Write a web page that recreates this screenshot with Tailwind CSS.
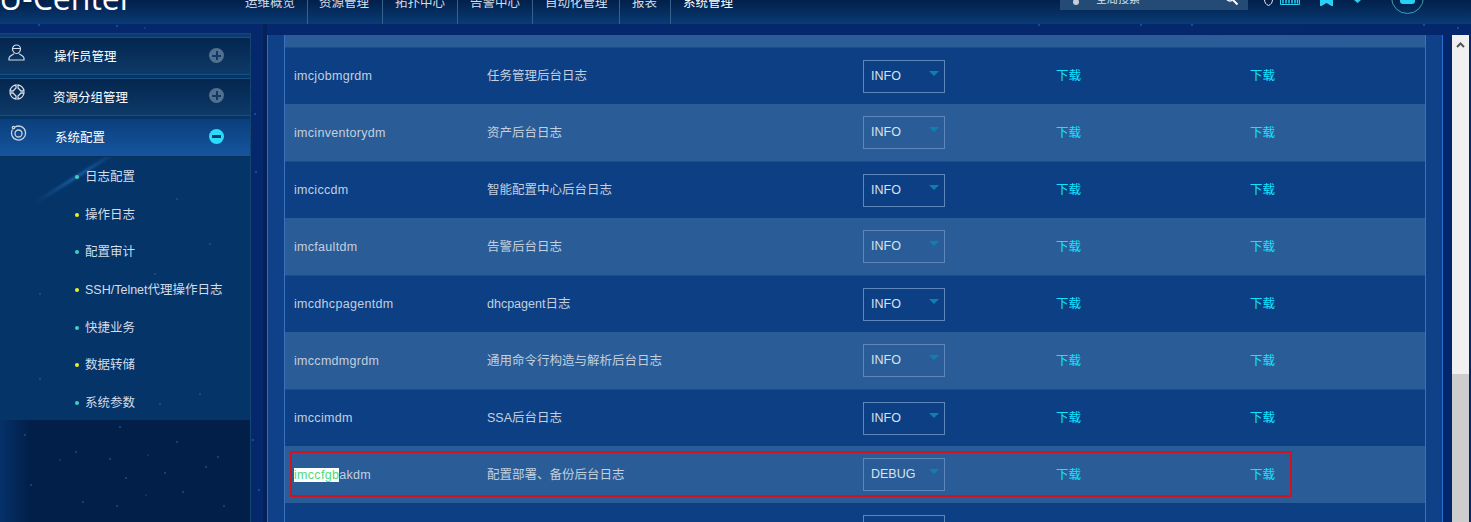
<!DOCTYPE html>
<html lang="zh-CN">
<head>
<meta charset="UTF-8">
<title>U-Center</title>
<script src="https://cdn.jsdelivr.net/npm/@tailwindcss/browser@4"></script>
</head>
<body class="bg-[#04266a] overflow-hidden font-['Liberation_Sans','Noto_Sans_CJK_SC',sans-serif]">
<div class="relative w-[1471px] h-[522px] overflow-hidden">

  <!-- Top bar -->
  <header class="h-[24px] flex items-start bg-gradient-to-b from-[#02204a] to-[#0a3b76] overflow-hidden">
    <div class="w-[246px] shrink-0 -mt-[18px] -ml-[1px] text-[32px] leading-[32px] font-['Open_Sans'] font-medium text-white whitespace-nowrap">U-Center</div>
    <nav class="flex h-[24px] text-[12.5px] leading-[14px] text-[#d4deea] -mt-[4px] whitespace-nowrap">
      <a class="w-[63px] border-r border-[#36618c] h-[28px]">运维概览</a>
      <a class="w-[75px] pl-[11px] border-r border-[#36618c] h-[28px]">资源管理</a>
      <a class="w-[75px] pl-[12px] border-r border-[#36618c] h-[28px]">拓扑中心</a>
      <a class="w-[75px] pl-[12px] border-r border-[#36618c] h-[28px]">告警中心</a>
      <a class="w-[87px] pl-[12px] border-r border-[#36618c] h-[28px]">自动化管理</a>
      <a class="w-[51px] pl-[12px] border-r border-[#36618c] h-[28px]">报表</a>
      <a class="pl-[12px] text-white">系统管理</a>
    </nav>
    <div class="ml-[327px] w-[188px] h-[10px] bg-[#234b76] shrink-0 relative overflow-hidden">
      <span class="absolute left-[13px] -top-[1px] w-[6px] h-[6px] rounded-full bg-[#c6ced8]"></span>
      <span class="absolute left-[36px] -top-[7px] text-[11px] leading-[12px] text-[#d7e1ec] whitespace-nowrap">全局搜索</span>
      <svg class="absolute left-[165px] -top-[7px]" width="14" height="14" viewBox="0 0 14 14" fill="none" stroke="#fff" stroke-width="1.500"><circle cx="5" cy="4" r="4"/><path d="M8 7l4.500 4.500" stroke-width="2"/></svg>
    </div>
    <div class="flex items-start shrink-0">
      <svg class="ml-[16px] -mt-[2px]" width="9" height="8" viewBox="0 0 9 8" fill="none" stroke="#e8eef5"><path d="M.5 1.500c1.500 0 3-1 4-1s2.500 1 4 1c0 3-1.500 5-4 6-2.500-1-4-3-4-6z"/></svg>
      <svg class="ml-[7px]" width="20" height="5" viewBox="0 0 20 5" fill="none"><path d="M.500 0v4.500h19V0" stroke="#28d0f5"/><path d="M3 0v3.500M6 0v3.500M9 0v3.500M12 0v3.500M15 0v3.500M17.500 0v3.500" stroke="#28d0f5" stroke-width="1.500"/></svg>
      <svg class="ml-[19px]" width="15" height="6" viewBox="0 0 15 6" fill="#28d0f5"><path d="M1 0h13v6h-1.500L7.500 3 2.500 6H1z"/></svg>
      <svg class="ml-[20px]" width="7" height="3" viewBox="0 0 7 3" fill="#28d0f5"><path d="M0 0h7L3.500 3z"/></svg>
    </div>
    <div class="ml-[30px] w-[33px] h-[33px] -mt-[19px] rounded-full border border-[#4a9aae] shrink-0 flex items-end justify-center pb-[9px]">
      <span class="w-[15px] h-[5px] rounded-b-[3px] bg-[#28d0f5]"></span>
    </div>
    <span class="ml-[7px] -mt-[10px] text-[12.500px] leading-[13px] text-white">admin</span>
  </header>

  <div class="relative flex h-[498px] bg-gradient-to-r from-[#04286b] from-[80%] to-[#04266a]">
    <!-- Starry background -->
    <svg class="absolute inset-0" width="1471" height="498" fill="#1b59a8">
      <circle cx="39" cy="1" r="1"/><circle cx="117" cy="2" r="1"/><circle cx="145" cy="4" r=".8"/><circle cx="1039" cy="1" r="1"/><circle cx="1141" cy="1" r="1"/><circle cx="1192" cy="1" r="1"/><circle cx="1424" cy="1" r="1"/><circle cx="1458" cy="4" r="1"/><circle cx="255" cy="90" r="1"/><circle cx="256" cy="148" r="1"/><circle cx="253" cy="416" r="1"/><circle cx="259" cy="466" r="1"/>
    </svg>
    <div class="absolute left-[263px] top-0 w-[4px] h-full bg-[#041f50]/70"></div>

    <!-- Left menu -->
    <aside class="relative w-[251px] h-[498px] shrink-0 mt-[9px] border-t border-r border-[#14476f] bg-gradient-to-r from-[#06316a] from-0% via-[#021f49] via-[12%] to-[#021f49] overflow-hidden">
      <svg class="absolute left-0 top-[386px]" width="250" height="110" fill="#174c92">
        <circle cx="25" cy="15" r="1"/><circle cx="76" cy="32" r="1"/><circle cx="110" cy="39" r="1"/><circle cx="120" cy="7" r="1"/><circle cx="177" cy="22" r="1"/><circle cx="218" cy="37" r="1"/><circle cx="206" cy="47" r="1"/><circle cx="126" cy="58" r="1"/><circle cx="165" cy="53" r="1"/><circle cx="31" cy="65" r="1"/><circle cx="83" cy="82" r="1"/><circle cx="117" cy="86" r="1"/><circle cx="183" cy="72" r="1"/><circle cx="224" cy="86" r="1"/><circle cx="215" cy="105" r="2" fill="#0f4a9c"/><circle cx="146" cy="75" r=".8"/><circle cx="148" cy="35" r=".8"/><circle cx="60" cy="40" r=".8"/>
      </svg>
      <div class="relative h-[386px] bg-[#053468] overflow-hidden">
        <!-- Light streak -->
        <div class="absolute left-[27px] top-[141px] w-[100px] h-[3px] -rotate-[32deg] bg-gradient-to-r from-transparent via-[#1a64aa] to-transparent blur-[1px]"></div>
        <svg class="absolute left-0 top-[120px]" width="250" height="265" fill="#14539a">
          <circle cx="177" cy="45" r="1"/><circle cx="210" cy="90" r="1"/><circle cx="155" cy="120" r="1"/><circle cx="40" cy="140" r="1"/><circle cx="200" cy="240" r="1"/><circle cx="40" cy="225" r="1"/><circle cx="160" cy="250" r="1"/><circle cx="120" cy="200" r=".8"/>
        </svg>

        <div class="h-[3px] bg-[#0a3a72]"></div>
        <div class="relative flex items-start h-[38px] border-y border-[#17507f] bg-gradient-to-b from-[#04264f] to-[#0e3a68]">
          <svg class="ml-[8px] mt-[6px] w-[17px] h-[17px]" viewBox="0 0 17 17" fill="none" stroke="#d5dde6" stroke-width="1.200"><path d="M4.500 5a4 4 0 0 1 8 0c0 2-1.500 4.500-4 4.500S4.500 7 4.500 5zM4 4.500h9"/><path d="M6 9.500c0 1-4.500 2-5 4.500v2h15v-2c-.5-2.500-5-3.500-5-4.500"/></svg>
          <span class="ml-[29px] mt-[10px] text-[12.500px] leading-[18px] text-white">操作员管理</span>
          <span class="ml-auto mr-[26px] mt-[10px] w-[15px] h-[15px] rounded-full bg-[#52708f] relative"><span class="absolute left-[3px] top-[6.500px] w-[9px] h-[2px] bg-[#0f3a66]"></span><span class="absolute left-[6.500px] top-[3px] w-[2px] h-[9px] bg-[#0f3a66]"></span></span>
        </div>
        <div class="relative flex items-start h-[38px] mt-[3px] border-y border-[#17507f] bg-gradient-to-b from-[#04264f] to-[#0e3a68]">
          <svg class="ml-[9px] mt-[5px] w-[16px] h-[16px]" viewBox="0 0 16 16" fill="none" stroke="#d5dde6" stroke-width="1.300"><path d="M7 1v3L4 7H1c.4-3 3-5.600 6-6zM9 1v3l3 3h3c-.4-3-3-5.600-6-6zM7 15v-3L4 9H1c.4 3 3 5.600 6 6zM9 15v-3l3-3h3c-.4 3-3 5.600-6 6z"/></svg>
          <span class="ml-[28px] mt-[10px] text-[12.500px] leading-[18px] text-white">资源分组管理</span>
          <span class="ml-auto mr-[26px] mt-[9px] w-[15px] h-[15px] rounded-full bg-[#52708f] relative"><span class="absolute left-[3px] top-[6.500px] w-[9px] h-[2px] bg-[#0f3a66]"></span><span class="absolute left-[6.500px] top-[3px] w-[2px] h-[9px] bg-[#0f3a66]"></span></span>
        </div>
        <div class="relative flex items-start h-[38px] mt-[3px] border-b border-[#0b2f5a] bg-gradient-to-b from-[#0b3f7c] to-[#15559f]">
          <svg class="ml-[10px] mt-[6px] w-[17px] h-[17px]" viewBox="0 0 17 17" fill="none" stroke="#c9d5e2" stroke-width="1.300"><path d="M5 2a7 7 0 1 1-2.500 2.500"/><circle cx="3.500" cy="2.500" r="1.200"/><circle cx="8.500" cy="8.500" r="3.500"/></svg>
          <span class="ml-[28px] mt-[10px] text-[12.500px] leading-[18px] text-white">系统配置</span>
          <span class="ml-auto mr-[26px] mt-[10px] w-[15px] h-[15px] rounded-full bg-[#28dcfb] relative"><span class="absolute left-[3px] top-[6px] w-[9px] h-[3px] bg-[#0f3a66]"></span></span>
        </div>
        <ul class="relative text-[12.500px] leading-[18px] text-[#d3dde8]">
          <li class="flex items-center h-[37.700px] mt-[1px]"><span class="ml-[75px] w-[4px] h-[4px] rounded-full bg-[#3fd0c0]"></span><span class="ml-[6px]">日志配置</span></li>
          <li class="flex items-center h-[37.700px]"><span class="ml-[75px] w-[4px] h-[4px] rounded-full bg-[#f0ee20]"></span><span class="ml-[6px]">操作日志</span></li>
          <li class="flex items-center h-[37.700px]"><span class="ml-[75px] w-[4px] h-[4px] rounded-full bg-[#3fd0c0]"></span><span class="ml-[6px]">配置审计</span></li>
          <li class="flex items-center h-[37.700px]"><span class="ml-[75px] w-[4px] h-[4px] rounded-full bg-[#f0ee20]"></span><span class="ml-[6px]">SSH/Telnet代理操作日志</span></li>
          <li class="flex items-center h-[37.700px]"><span class="ml-[75px] w-[4px] h-[4px] rounded-full bg-[#3fd0c0]"></span><span class="ml-[6px]">快捷业务</span></li>
          <li class="flex items-center h-[37.700px]"><span class="ml-[75px] w-[4px] h-[4px] rounded-full bg-[#f0ee20]"></span><span class="ml-[6px]">数据转储</span></li>
          <li class="flex items-center h-[37.700px]"><span class="ml-[75px] w-[4px] h-[4px] rounded-full bg-[#3fd0c0]"></span><span class="ml-[6px]">系统参数</span></li>
        </ul>
      </div>
    </aside>

    <!-- Log table panel -->
    <main class="relative ml-[16px] mt-[11px] w-[1176px] h-[487px] bg-[#0e4187] border-x border-[#2a6fd0] px-[16px] overflow-hidden">
      <div class="border-x border-[#3a72c0] text-[12.500px] leading-[16px] text-[#c3cfdd]">
        <div class="h-[12px] bg-[#2a5d98]"></div>

        <div class="grid grid-cols-[193px_376px_194px_193px_1fr] items-center h-[57px] pl-[9px] bg-[#0d3f85] border-t border-[#1a4c90]">
          <span class="tracking-[0.3px]">imcjobmgrdm</span><span>任务管理后台日志</span>
          <span class="relative w-[82px] h-[33px] border border-[#5f86b8] pl-[7px] leading-[31px] text-[#d8e2ee]">INFO<i class="absolute right-[5px] top-[10px] border-x-[5px] border-t-[5px] border-x-transparent border-t-[#0f7fb0]"></i></span>
          <a class="-ml-[1px] text-[#10e4fb]">下载</a><a class="text-[#10e4fb]">下载</a>
        </div>
        <div class="grid grid-cols-[193px_376px_194px_193px_1fr] items-center h-[57px] pl-[9px] bg-[#2a5d98]">
          <span class="tracking-[0.3px]">imcinventorydm</span><span>资产后台日志</span>
          <span class="relative w-[82px] h-[33px] border border-[#5f86b8] pl-[7px] leading-[31px] text-[#d8e2ee]">INFO<i class="absolute right-[5px] top-[10px] border-x-[5px] border-t-[5px] border-x-transparent border-t-[#0f7fb0]"></i></span>
          <a class="-ml-[1px] text-[#10e4fb]">下载</a><a class="text-[#10e4fb]">下载</a>
        </div>
        <div class="grid grid-cols-[193px_376px_194px_193px_1fr] items-center h-[57px] pl-[9px] bg-[#0d3f85] border-t border-[#1a4c90]">
          <span class="tracking-[0.3px]">imciccdm</span><span>智能配置中心后台日志</span>
          <span class="relative w-[82px] h-[33px] border border-[#5f86b8] pl-[7px] leading-[31px] text-[#d8e2ee]">INFO<i class="absolute right-[5px] top-[10px] border-x-[5px] border-t-[5px] border-x-transparent border-t-[#0f7fb0]"></i></span>
          <a class="-ml-[1px] text-[#10e4fb]">下载</a><a class="text-[#10e4fb]">下载</a>
        </div>
        <div class="grid grid-cols-[193px_376px_194px_193px_1fr] items-center h-[57px] pl-[9px] bg-[#2a5d98]">
          <span class="tracking-[0.3px]">imcfaultdm</span><span>告警后台日志</span>
          <span class="relative w-[82px] h-[33px] border border-[#5f86b8] pl-[7px] leading-[31px] text-[#d8e2ee]">INFO<i class="absolute right-[5px] top-[10px] border-x-[5px] border-t-[5px] border-x-transparent border-t-[#0f7fb0]"></i></span>
          <a class="-ml-[1px] text-[#10e4fb]">下载</a><a class="text-[#10e4fb]">下载</a>
        </div>
        <div class="grid grid-cols-[193px_376px_194px_193px_1fr] items-center h-[57px] pl-[9px] bg-[#0d3f85] border-t border-[#1a4c90]">
          <span class="tracking-[0.3px]">imcdhcpagentdm</span><span>dhcpagent日志</span>
          <span class="relative w-[82px] h-[33px] border border-[#5f86b8] pl-[7px] leading-[31px] text-[#d8e2ee]">INFO<i class="absolute right-[5px] top-[10px] border-x-[5px] border-t-[5px] border-x-transparent border-t-[#0f7fb0]"></i></span>
          <a class="-ml-[1px] text-[#10e4fb]">下载</a><a class="text-[#10e4fb]">下载</a>
        </div>
        <div class="grid grid-cols-[193px_376px_194px_193px_1fr] items-center h-[57px] pl-[9px] bg-[#2a5d98]">
          <span class="tracking-[0.3px]">imccmdmgrdm</span><span>通用命令行构造与解析后台日志</span>
          <span class="relative w-[82px] h-[33px] border border-[#5f86b8] pl-[7px] leading-[31px] text-[#d8e2ee]">INFO<i class="absolute right-[5px] top-[10px] border-x-[5px] border-t-[5px] border-x-transparent border-t-[#0f7fb0]"></i></span>
          <a class="-ml-[1px] text-[#10e4fb]">下载</a><a class="text-[#10e4fb]">下载</a>
        </div>
        <div class="grid grid-cols-[193px_376px_194px_193px_1fr] items-center h-[57px] pl-[9px] bg-[#0d3f85] border-t border-[#1a4c90]">
          <span class="tracking-[0.3px]">imccimdm</span><span>SSA后台日志</span>
          <span class="relative w-[82px] h-[33px] border border-[#5f86b8] pl-[7px] leading-[31px] text-[#d8e2ee]">INFO<i class="absolute right-[5px] top-[10px] border-x-[5px] border-t-[5px] border-x-transparent border-t-[#0f7fb0]"></i></span>
          <a class="-ml-[1px] text-[#10e4fb]">下载</a><a class="text-[#10e4fb]">下载</a>
        </div>
        <div class="relative grid grid-cols-[193px_376px_194px_193px_1fr] items-center h-[57px] pl-[9px] bg-[#2a5d98]">
          <span class="tracking-[0.3px]"><mark class="bg-white text-[#4ed97a]">imccfgb</mark>akdm</span><span>配置部署、备份后台日志</span>
          <span class="relative w-[82px] h-[33px] border border-[#5f86b8] pl-[7px] leading-[31px] text-[#d8e2ee]">DEBUG<i class="absolute right-[5px] top-[10px] border-x-[5px] border-t-[5px] border-x-transparent border-t-[#0f7fb0]"></i></span>
          <a class="-ml-[1px] text-[#10e4fb]">下载</a><a class="text-[#10e4fb]">下载</a>
          <div class="absolute left-[5px] top-[5px] w-[1002px] h-[46px] border-2 border-[#d3121e]"></div>
        </div>
        <div class="grid grid-cols-[193px_376px_194px_193px_1fr] items-start h-[57px] pl-[9px] pt-[12px] bg-[#0d3f85]">
          <span></span><span></span>
          <span class="w-[82px] h-[33px] border border-[#5f86b8]"></span>
        </div>
      </div>
    </main>

    <!-- Page scrollbar -->
    <div class="relative ml-[9px] mt-[11px] w-[17px] h-[487px] bg-[#f0f0f0] flex flex-col items-center">
      <svg class="mt-[7px]" width="9" height="6" viewBox="0 0 9 6" fill="none" stroke="#555" stroke-width="2"><path d="M1 5l3.500-3.500L8 5"/></svg>
      <div class="absolute left-0 top-[339px] w-full h-[148px] bg-[#cdcdcd]"></div>
    </div>
  </div>
</div>
</body>
</html>
